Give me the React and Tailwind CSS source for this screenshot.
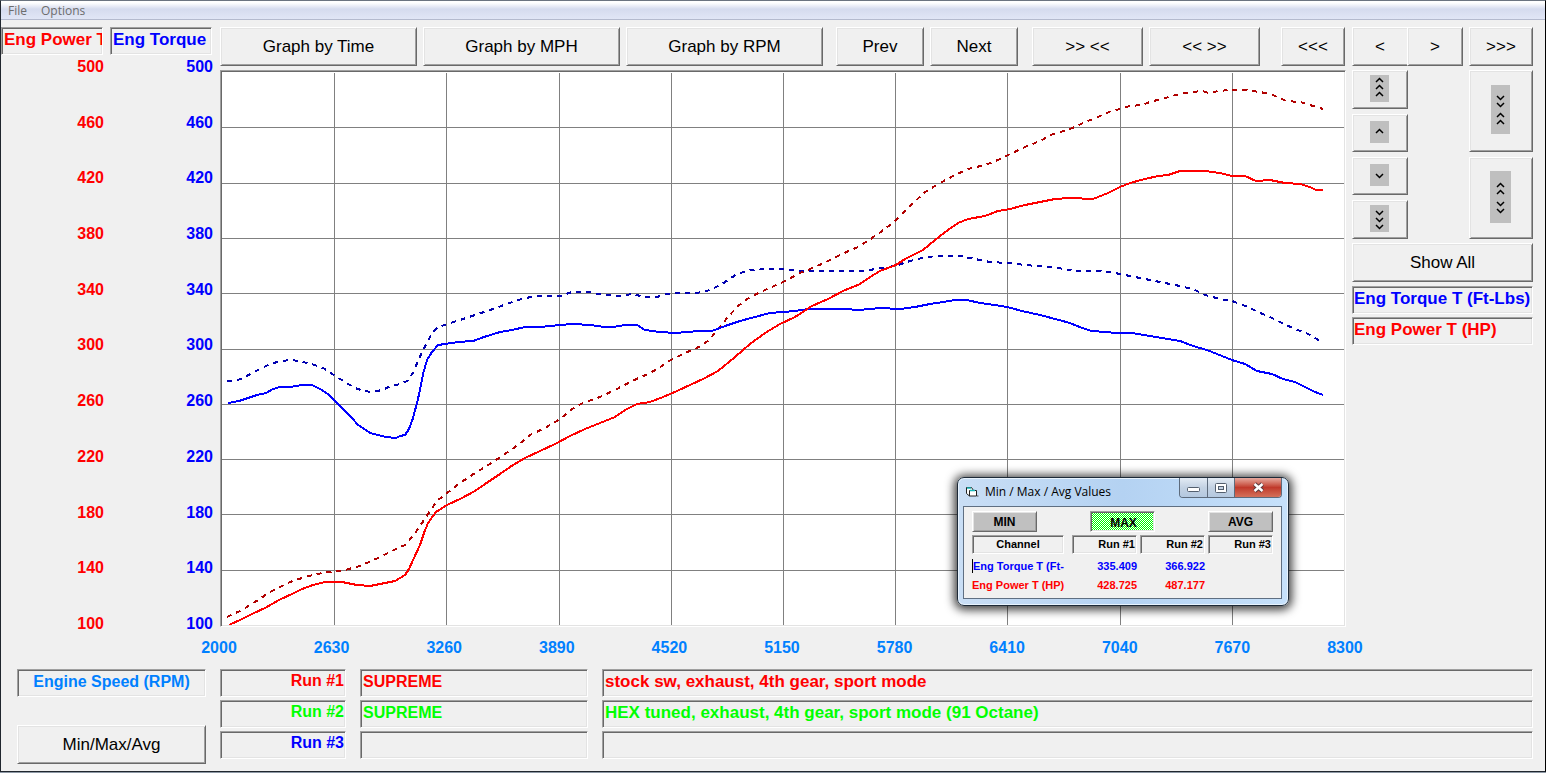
import React from 'react';

const RAISED =
    'border border-t-white border-l-white border-r-[#696969] border-b-[#696969] shadow-[inset_1px_1px_0_#e3e3e3,inset_-1px_-1px_0_#a0a0a0]';
const SUNKEN =
    'border border-t-[#a0a0a0] border-l-[#a0a0a0] border-r-white border-b-white shadow-[inset_1px_1px_0_#696969,inset_-1px_-1px_0_#e3e3e3]';

const yTicks = [500, 460, 420, 380, 340, 300, 260, 220, 180, 140, 100];
const xTicks = [2000, 2630, 3260, 3890, 4520, 5150, 5780, 6410, 7040, 7670, 8300];

const gridX = [334, 446, 559, 671, 783, 895, 1007, 1120, 1232];
const gridY = [127, 183, 238, 293, 349, 404, 459, 514, 570];

const curves = [
    {
        id: 'torque-run2',
        color: '#0000b0',
        dashed: true,
        points:
            '227,381 238,380 245,377 256,371 268,365 280,361 292,360 303,362 315,365 325,369 335,376 345,382 355,388 364,391 372,392 382,390 391,386 400,384 407,381 413,373 418,361 422,352 427,343 432,333 437,328 447,324 460,320 475,315 490,310 504,305 518,300 535,296 560,296 572,292 588,292 604,295 620,296 632,294 645,297 657,297 667,294 680,293 697,293 710,290 722,284 737,274 750,270 770,269 785,269 800,271 865,271 880,268 895,266 910,261 922,258 935,256 960,256 975,259 990,262 1007,263 1025,265 1050,267 1064,269 1075,271 1100,271 1115,273 1135,277 1160,282 1180,286 1195,290 1205,295 1220,299 1232,301 1248,307 1258,312 1270,317 1282,323 1295,329 1308,334 1322,342',
    },
    {
        id: 'power-run2',
        color: '#b00000',
        dashed: true,
        points:
            '227,617 240,611 255,602 270,592 290,582 305,577 322,573 345,570 360,566 378,558 392,551 405,545 413,536 422,523 430,511 437,501 447,493 460,483 475,473 490,464 505,454 518,445 530,435 545,428 560,419 572,409 583,403 600,397 615,390 632,381 648,374 657,369 671,360 685,353 697,348 708,341 716,332 727,318 738,306 750,297 765,290 783,282 800,273 815,267 830,260 842,254 858,247 872,238 885,229 897,219 910,206 925,192 940,183 955,175 968,169 985,165 998,160 1010,154 1025,147 1040,141 1053,134 1068,130 1083,123 1098,117 1111,111 1120,109 1130,106 1142,105 1150,102 1165,98 1180,94 1193,92 1202,91 1209,93 1218,91 1230,90 1245,90 1260,92 1270,94 1280,98 1286,101 1300,102 1310,105 1323,109',
    },
    {
        id: 'torque-run1',
        color: '#0000ff',
        points:
            '228,403 239,401 248,398 257,395 266,393 273,389 280,387 290,387 302,385 312,385 320,389 328,394 335,401 344,410 352,418 358,425 366,430 370,433 378,435 386,437 396,438 400,436 405,435 409,429 413,418 417,403 420,390 423,374 427,360 432,352 438,345 445,344 458,342 473,341 484,337 500,332 512,330 525,327 540,327 560,325 573,324 590,325 605,327 613,327 625,325 637,325 645,330 660,332 675,333 688,332 698,331 705,331 712,331 720,328 728,325 740,321 755,317 770,313 783,312 795,311 808,309 835,309 845,309 858,310 870,309 880,308 900,309 915,307 930,304 943,302 955,300 967,300 980,303 995,305 1007,307 1022,311 1040,315 1055,319 1070,323 1082,328 1092,331 1105,332 1116,333 1132,333 1150,336 1168,339 1180,341 1193,346 1207,350 1222,356 1232,360 1245,364 1257,371 1272,374 1283,379 1295,382 1305,387 1315,392 1323,395',
    },
    {
        id: 'power-run1',
        color: '#ff0000',
        points:
            '229,625 240,620 252,614 265,608 279,600 292,594 302,589 313,585 325,582 342,582 357,585 370,586 380,584 395,581 405,575 409,569 414,558 420,545 424,533 428,523 436,512 447,505 460,499 475,491 488,482 500,474 513,465 525,458 540,451 555,444 570,436 585,429 600,423 615,417 625,410 637,404 650,402 663,397 677,391 690,385 705,378 718,371 735,357 750,344 765,333 780,324 795,317 812,306 828,299 843,291 860,284 870,277 880,271 896,265 905,259 923,250 935,240 948,230 958,223 968,219 985,216 998,211 1010,209 1025,205 1040,202 1055,199 1070,198 1093,199 1108,193 1120,187 1130,183 1145,179 1158,176 1168,175 1180,171 1205,171 1220,173 1232,176 1245,176 1256,181 1270,180 1285,183 1300,184 1310,187 1316,190 1323,190',
    },
];

const runs = [
    { id: 1, color: 'text-[#ff0000]', name: 'SUPREME', note: 'stock sw, exhaust, 4th gear, sport mode' },
    { id: 2, color: 'text-[#00ff00]', name: 'SUPREME', note: 'HEX tuned, exhaust, 4th gear, sport mode (91 Octane)' },
    { id: 3, color: 'text-[#0000ff]', name: '', note: '' },
];

const summary = [
    { channel: 'Eng Torque T (Ft-', values: ['335.409', '366.922', ''], color: 'text-[#0000ff]', caret: true },
    { channel: 'Eng Power T (HP)', values: ['428.725', '487.177', ''], color: 'text-[#ff0000]' },
];

function Button({ className = '', children, ...rest }) {
    return (
        <button
            type="button"
            className={`${RAISED} flex min-w-0 items-center justify-center whitespace-nowrap bg-[#f0f0f0] text-[17px] leading-5 text-black ${className}`}
            {...rest}
        >
            {children}
        </button>
    );
}

function Field({ className = '', children }) {
    return (
        <div className={`${SUNKEN} h-7 shrink-0 overflow-hidden whitespace-nowrap px-px leading-[18px] font-bold ${className}`}>
            {children}
        </div>
    );
}

// marks: [direction, y of the chevron's centre]
function Chevrons({ width = 19, height, marks }) {
    const x = Math.floor(width / 2);
    return (
        <svg width={width} height={height} className="bg-[#bfbfbf]" aria-hidden="true">
            {marks.map(([dir, y]) => (
                <path
                    key={y}
                    d={dir === 'up' ? `M${x - 3} ${y + 2}l3.5 -3.5l3.5 3.5` : `M${x - 3} ${y - 1}l3.5 3.5l3.5 -3.5`}
                    fill="none"
                    stroke="#000"
                    strokeWidth="1.5"
                />
            ))}
        </svg>
    );
}

function YAxis({ title, color }) {
    return (
        <div className={`flex w-[102px] flex-col ${color}`}>
            <Field className="pt-[3px] pl-0.5 text-[17px]">{title}</Field>
            <div className="mt-[3px] -mr-px -mb-1.5 flex grow flex-col justify-between text-right text-base leading-[18px] font-bold">
                {yTicks.map((tick) => (
                    <span key={tick}>{tick}</span>
                ))}
            </div>
        </div>
    );
}

function Plot() {
    return (
        <svg
            viewBox="222 72 1122 553"
            preserveAspectRatio="none"
            shapeRendering="crispEdges"
            className="block h-0 min-h-80 w-full grow"
            role="img"
            aria-label="Engine power and torque by RPM"
        >
            <g fill="#808080">
                {gridX.map((x) => (
                    <rect key={x} x={x} y="73" width="1" height="552" />
                ))}
                {gridY.map((y) => (
                    <rect key={y} x="222" y={y} width="1122" height="1" />
                ))}
            </g>
            {curves.map((curve) => (
                <polyline
                    key={curve.id}
                    points={curve.points}
                    fill="none"
                    stroke={curve.color}
                    strokeWidth="2"
                    strokeDasharray={curve.dashed ? '5 5' : undefined}
                    vectorEffect="non-scaling-stroke"
                />
            ))}
        </svg>
    );
}

function WindowButtons() {
    return (
        <div className="flex h-5 w-[103px] overflow-hidden rounded-b-[4px] border border-t-0 border-[#5d6b7c]">
            <button type="button" aria-label="Minimize" className="flex w-7 items-center justify-center border-r border-[#5d6b7c] bg-linear-to-b from-[#e3ebf4] via-[#c3d2e3] via-50% to-[#b4c8df]">
                <svg width="13" height="6" className="mt-1">
                    <rect x="0.5" y="0.5" width="12" height="4" rx="1" fill="#fff" stroke="#535f6e" />
                </svg>
            </button>
            <button type="button" aria-label="Maximize" className="flex w-[27px] items-center justify-center border-r border-[#5d6b7c] bg-linear-to-b from-[#e3ebf4] via-[#c3d2e3] via-50% to-[#b4c8df]">
                <svg width="12" height="10">
                    <rect x="0.5" y="0.5" width="11" height="9" rx="1" fill="#fff" stroke="#535f6e" />
                    <rect x="3.5" y="3.5" width="5" height="3" fill="#c3d2e3" stroke="#535f6e" />
                </svg>
            </button>
            <button type="button" aria-label="Close" className="flex grow items-center justify-center bg-linear-to-b from-[#e5a99f] via-[#c0392b] via-50% to-[#d4705a]">
                <svg width="13" height="11">
                    <path d="M2.5 2l8 7M10.5 2l-8 7" stroke="#5a3a3e" strokeWidth="4.5" />
                    <path d="M2.5 2l8 7M10.5 2l-8 7" stroke="#fff" strokeWidth="2.5" />
                </svg>
            </button>
        </div>
    );
}

// green and white pixels of a pressed button's face
function Dither() {
    return (
        <svg className="absolute inset-px h-[17px] w-[61px]" shapeRendering="crispEdges" aria-hidden="true">
            <defs>
                <pattern id="dither" width="2" height="2" patternUnits="userSpaceOnUse">
                    <rect width="2" height="2" fill="#fff" />
                    <rect width="1" height="1" fill="#00ff00" />
                    <rect x="1" y="1" width="1" height="1" fill="#00ff00" />
                </pattern>
            </defs>
            <rect width="61" height="17" fill="url(#dither)" />
        </svg>
    );
}

function MinMaxDialog() {
    const button = 'h-[21px] w-[65px] text-xs leading-4 font-bold text-black';
    return (
        <div
            role="dialog"
            aria-label="Min / Max / Avg Values"
            className="absolute right-14 bottom-5 w-[332px] rounded-[7px] border border-[#1d2a38] bg-linear-to-r from-[#c9def5] via-[#b4d2f2] to-[#c6e1fb] pr-1.5 pb-1.5 pl-[5px] shadow-[inset_0_0_0_1px_#e8f3fd,0_1px_10px_3px_rgba(0,0,0,0.75)]"
        >
            <div className="flex h-7 items-start justify-between">
                <div className="flex items-center gap-1.5 pt-1.5 pl-0.5 font-['Open_Sans',sans-serif] text-xs leading-4 text-black">
                    <svg width="14" height="12" aria-hidden="true">
                        <path d="M1.5 1.5v6l3 2.5h7v-5.5h-3l-2 -3z" fill="#fff" stroke="#222" />
                        <path d="M4.5 10v-5.5h6" fill="none" stroke="#222" />
                        <path d="M2 2h4M5 4.5h5" stroke="#18b8b8" strokeWidth="1.5" />
                        <path d="M12 10h1.5" stroke="#555" />
                    </svg>
                    Min / Max / Avg Values
                </div>
                <WindowButtons />
            </div>
            <div className="border border-[#5f6f82] bg-[#f0f0f0] px-2 pt-1 pb-[3px]">
                <div className="flex justify-between">
                    <button type="button" className={`${RAISED} ${button} bg-[#c0c0c0]`}>MIN</button>
                    <button type="button" aria-pressed="true" className={`${SUNKEN} ${button} relative pt-0.5 pl-0.5`}>
                        <Dither />
                        <span className="relative">MAX</span>
                    </button>
                    <button type="button" className={`${RAISED} ${button} bg-[#c0c0c0]`}>AVG</button>
                </div>
                <table className="mt-[3px] w-full table-fixed text-[11px] font-bold">
                    <thead>
                        <tr className="leading-[15px] text-black">
                            <th scope="col" className="w-[100px] p-0 pr-2">
                                <div className={`${SUNKEN} h-[19px] p-px text-center`}>Channel</div>
                            </th>
                            <th scope="col" className="w-[68px] p-0 pr-[3px]">
                                <div className={`${SUNKEN} h-[19px] p-px text-right`}>Run #1</div>
                            </th>
                            <th scope="col" className="w-[68px] p-0 pr-[3px]">
                                <div className={`${SUNKEN} h-[19px] p-px text-right`}>Run #2</div>
                            </th>
                            <th scope="col" className="p-0">
                                <div className={`${SUNKEN} h-[19px] p-px text-right`}>Run #3</div>
                            </th>
                        </tr>
                    </thead>
                    <tbody className="border-t-2 border-transparent">
                        {summary.map((row) => (
                            <tr key={row.channel} className={`h-5 leading-[14px] ${row.color}`}>
                                <td className="p-0 whitespace-nowrap">
                                    <div className={row.caret ? 'border-l border-black' : ''}>{row.channel}</div>
                                </td>
                                {row.values.map((value, index) => (
                                    <td key={index} className="p-0 pr-[3px] text-right">{value}</td>
                                ))}
                            </tr>
                        ))}
                    </tbody>
                </table>
            </div>
        </div>
    );
}

function Toolbar() {
    return (
        <div className="grid h-[39px] shrink-0 grid-cols-[197fr_197fr_197fr_95fr_88fr_119fr_111fr_79fr] gap-1.5 pr-px">
            <Button>Graph by Time</Button>
            <Button>Graph by MPH</Button>
            <Button>Graph by RPM</Button>
            <Button className="ml-[7px]">Prev</Button>
            <Button>Next</Button>
            <Button className="ml-2">&gt;&gt; &lt;&lt;</Button>
            <Button>&lt;&lt; &gt;&gt;</Button>
            <Button className="ml-[15px]">&lt;&lt;&lt;</Button>
        </div>
    );
}

function SidePanel() {
    return (
        <div className="w-[181px] shrink-0">
            <div className="flex h-[39px]">
                <Button className="w-[55px] border-r-0 shadow-[inset_1px_1px_0_#e3e3e3,inset_0_-1px_0_#a0a0a0]">&lt;</Button>
                <Button className="w-14">&gt;</Button>
                <Button className="ml-1.5 w-16">&gt;&gt;&gt;</Button>
            </div>
            <div className="mt-1 flex justify-between">
                <div className="flex w-14 flex-col gap-[5px]">
                    <Button aria-label="Scroll up fast" className="h-[39px] pr-px pb-0.5">
                        <Chevrons height={27} marks={[['up', 5], ['up', 12], ['up', 19]]} />
                    </Button>
                    <Button aria-label="Scroll up" className="h-[38px] pr-px pb-0.5">
                        <Chevrons height={22} marks={[['up', 10]]} />
                    </Button>
                    <Button aria-label="Scroll down" className="h-[38px] pr-px pb-0.5">
                        <Chevrons height={22} marks={[['down', 11]]} />
                    </Button>
                    <Button aria-label="Scroll down fast" className="h-[39px] pr-px pb-0.5">
                        <Chevrons height={27} marks={[['down', 7], ['down', 14], ['down', 21]]} />
                    </Button>
                </div>
                <div className="flex w-16 flex-col gap-[5px]">
                    <Button aria-label="Compress vertical scale" className="h-[82px] pr-px pb-[3px]">
                        <Chevrons height={49} marks={[['down', 12], ['down', 19], ['up', 30], ['up', 37]]} />
                    </Button>
                    <Button aria-label="Expand vertical scale" className="h-[82px] pr-px pb-0.5">
                        <Chevrons width={21} height={52} marks={[['up', 14], ['up', 21], ['down', 32], ['down', 39]]} />
                    </Button>
                </div>
            </div>
            <Button className="mt-1 h-[39px] w-full">Show All</Button>
            <Field className="mt-1 pt-[3px] text-[17px] text-[#0000ff]">Eng Torque T (Ft-Lbs)</Field>
            <Field className="mt-[3px] pt-[3px] text-[17px] text-[#ff0000]">Eng Power T (HP)</Field>
        </div>
    );
}

function RunTable() {
    const input = `${SUNKEN} h-7 min-w-0 bg-[#f0f0f0] px-0.5 pb-0.5 leading-[18px] font-bold outline-none`;
    return (
        <div className="flex grow flex-col gap-[3px]">
            {runs.map((run) => (
                <div key={run.id} className="flex gap-3.5">
                    <label htmlFor={`run-${run.id}`} className="w-[126px] shrink-0">
                        <Field className={`pt-0.5 text-right text-base ${run.color}`}>Run #{run.id}</Field>
                    </label>
                    <input id={`run-${run.id}`} className={`${input} w-[228px] shrink-0 text-base ${run.color}`} defaultValue={run.name} />
                    <input aria-label={`Run ${run.id} comment`} className={`${input} grow text-[17px] ${run.color}`} defaultValue={run.note} />
                </div>
            ))}
        </div>
    );
}

export default function App() {
    return (
        <div className="flex min-h-screen flex-col bg-[#8d98a5] pb-px font-['Liberation_Sans',Arial,sans-serif]">
            <div className="flex grow flex-col border border-t-[#6b7480] border-r-black border-b-[#20262e] border-l-[#20262e] bg-[#f0f0f0]">
                <nav className="flex h-[19px] gap-3.5 border-b border-[#b4bace] bg-linear-to-b from-white from-10% via-[#d5dbee] via-45% to-[#e1e6f6] pl-[7px] font-['Open_Sans',sans-serif] text-xs leading-[19px] text-[#6d6d6d]">
                    <button type="button">File</button>
                    <button type="button">Options</button>
                </nav>

                <div className="flex grow pt-[7px] pr-3">
                    <div className="flex shrink-0 gap-[7px]">
                        <YAxis title="Eng Power T" color="text-[#ff0000]" />
                        <YAxis title="Eng Torque" color="text-[#0000ff]" />
                    </div>
                    <div className="mr-1.5 ml-2 flex min-w-0 grow flex-col">
                        <Toolbar />
                        <div className={`${SUNKEN} relative mt-1 flex grow flex-col bg-white p-px`}>
                            <Plot />
                            <MinMaxDialog />
                        </div>
                    </div>
                    <SidePanel />
                </div>

                <div className="mt-3 flex justify-between pr-[182px] pl-[200px] text-base leading-[18px] font-bold text-[#0080ff]">
                    {xTicks.map((tick) => (
                        <span key={tick} className="w-9 text-center">{tick}</span>
                    ))}
                </div>

                <div className="mt-3 flex gap-3.5 pr-3 pb-[7px] pl-4">
                    <div className="flex w-[189px] shrink-0 flex-col justify-between">
                        <Field className="pt-[3px] text-center text-base text-[#0080ff]">Engine Speed (RPM)</Field>
                        <Button className="mt-7 h-[39px]">Min/Max/Avg</Button>
                    </div>
                    <RunTable />
                </div>
            </div>
        </div>
    );
}
